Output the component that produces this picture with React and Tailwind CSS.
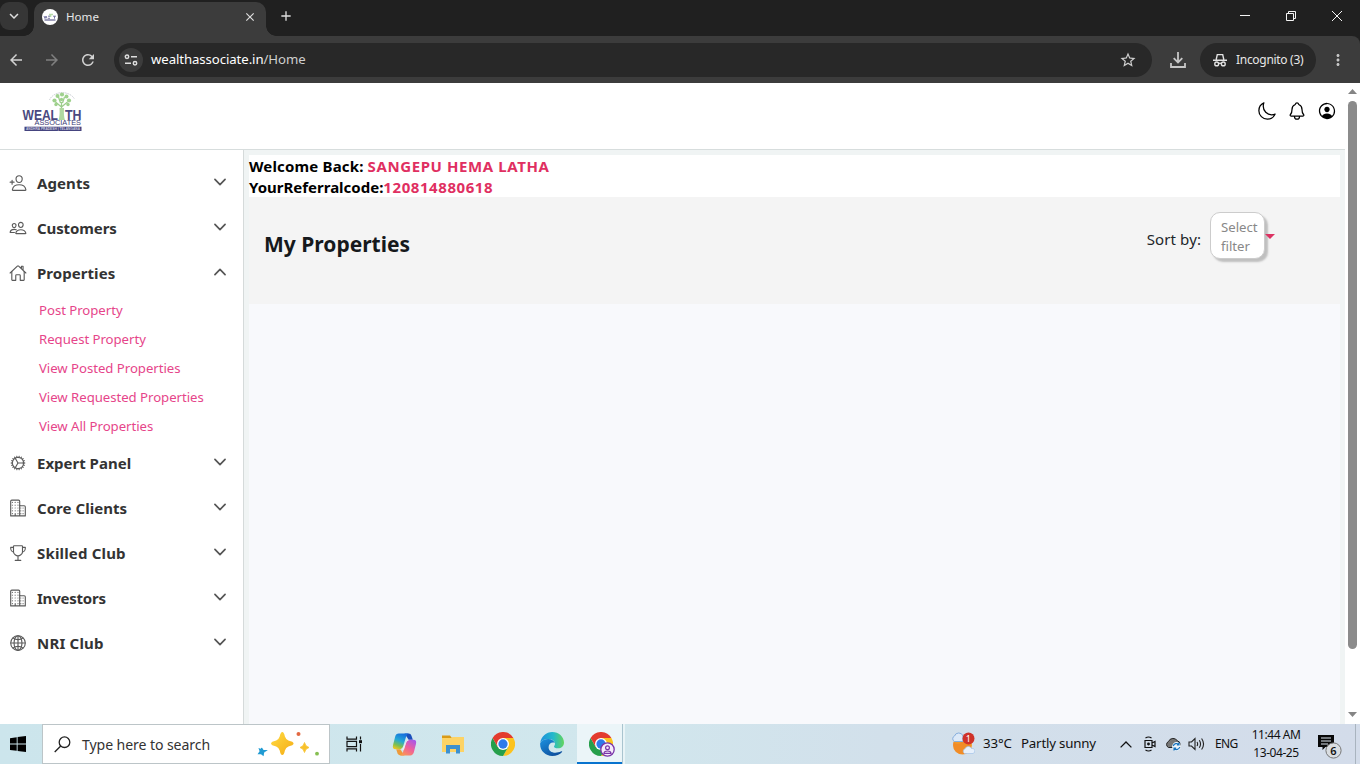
import React from "react";
import {
  IoPersonAddOutline,
  IoPeopleOutline,
  IoHomeOutline,
  IoCogOutline,
  IoBusinessOutline,
  IoTrophyOutline,
  IoGlobeOutline,
  IoChevronDownOutline,
  IoChevronUpOutline,
  IoMoonOutline,
  IoNotificationsOutline,
  IoPersonCircleOutline,
} from "react-icons/io5";
import {
  MdArrowBack,
  MdArrowForward,
  MdRefresh,
  MdStarBorder,
  MdMoreVert,
  MdClose,
  MdAdd,
  MdKeyboardArrowDown,
} from "react-icons/md";

const menu = [
  { label: "Agents", icon: IoPersonAddOutline, track: "tracking-[0.1px]" },
  { label: "Customers", icon: IoPeopleOutline, track: "tracking-[-0.1px]" },
  {
    label: "Properties",
    icon: IoHomeOutline,
    track: "tracking-[0.05px]",
    items: [
      "Post Property",
      "Request Property",
      "View Posted Properties",
      "View Requested Properties",
      "View All Properties",
    ],
  },
  { label: "Expert Panel", icon: IoCogOutline, track: "tracking-[0px]" },
  { label: "Core Clients", icon: IoBusinessOutline, track: "tracking-[0.05px]" },
  { label: "Skilled Club", icon: IoTrophyOutline, track: "tracking-[0.17px]" },
  { label: "Investors", icon: IoBusinessOutline, track: "tracking-[-0.22px]" },
  { label: "NRI Club", icon: IoGlobeOutline, track: "tracking-[0.2px]" },
];

function Logo({ className }) {
  return (
    <svg viewBox="0 0 60 42" className={className}>
      <path d="M27 10a13.5 11 0 0 1 25 -1" fill="none" stroke="#b9bec6" strokeWidth="0.8" strokeDasharray="1.5 0.8" />
      <g fill="none" stroke="#9ccd8b" strokeWidth="1.3">
        <path d="M39 29V12M39 17l-6-5M39 17l6-5M38 13l-2-6M40 13l2-6" />
      </g>
      <path d="M36 30q1.500-4 1-12h4.500q-.5 8 1 12z" fill="#b0d8a0" />
      <g fill="#9fd18d">
        <circle cx="32" cy="10.500" r="2.100" />
        <circle cx="35" cy="6" r="2" />
        <circle cx="39.500" cy="4.500" r="2.100" />
        <circle cx="44" cy="6.500" r="2" />
        <circle cx="46.500" cy="10.500" r="2.100" />
        <circle cx="33.500" cy="14.500" r="1.700" />
        <circle cx="45.500" cy="14.500" r="1.700" />
        <circle cx="39" cy="9.500" r="1.700" />
      </g>
      <text x="0" y="29.500" textLength="35.500" lengthAdjust="spacingAndGlyphs" fontFamily="Liberation Sans, sans-serif" fontWeight="700" fontSize="15" fill="#4a4980">WEAL</text>
      <text x="42.500" y="29.500" textLength="16.500" lengthAdjust="spacingAndGlyphs" fontFamily="Liberation Sans, sans-serif" fontWeight="700" fontSize="15" fill="#4a4980">TH</text>
      <text x="12" y="35.300" textLength="46.500" lengthAdjust="spacingAndGlyphs" fontFamily="Liberation Sans, sans-serif" fontSize="6.800" fill="#3b3a75">ASSOCIATES</text>
      <rect x="2" y="36.700" width="57" height="4.300" fill="#45447f" />
      <text x="3.500" y="40.300" textLength="54" lengthAdjust="spacingAndGlyphs" fontFamily="Liberation Sans, sans-serif" fontWeight="700" fontSize="3.800" fill="#c9c9de">ANDHRA PRADESH | TELANGANA</text>
    </svg>
  );
}

function TabIcon() {
  return (
    <svg viewBox="0 0 16 16" className="size-4">
      <circle cx="8" cy="8" r="8" fill="#fff" />
      <path d="M8.500 8V5M7 5.500h4" stroke="#b5dba8" strokeWidth="1.500" />
      <path d="M2 7l1 2.500L4 7l1 2.500M6 7.200h2M6 9.300h2M11 7.200h3M12.500 7.200v2.500" fill="none" stroke="#6c6b9b" strokeWidth="0.900" />
      <path d="M2.500 11h11" stroke="#77769f" strokeWidth="1.400" />
    </svg>
  );
}

function BrowserChrome() {
  return (
    <div className="h-[83px] shrink-0 bg-[#202020] text-[#dedede]">
      <div className="flex h-9 items-end">
        <div className="flex h-9 w-[34px] shrink-0 items-start rounded-br-[9px] bg-[#202020] pt-[2px]">
          <div className="flex size-7 items-center justify-center rounded-[9px] bg-[#363636]">
            <MdKeyboardArrowDown className="size-[18px]" />
          </div>
        </div>
        <div className="-ml-[10px] h-[10px] w-[10px] bg-[radial-gradient(circle_at_top_left,transparent_9.5px,#3c3c3c_10px)]" />
        <div className="flex h-[34px] w-[232px] items-center rounded-t-[10px] bg-[#3c3c3c] pr-[9px] pb-[4px] pl-2">
          <TabIcon />
          <span className="ml-2 flex-1 text-[11.600px] text-[#e6e6e6]">Home</span>
          <MdClose className="size-[14px]" />
        </div>
        <div className="h-[10px] w-[10px] bg-[radial-gradient(circle_at_top_right,transparent_9.5px,#3c3c3c_10px)]" />
        <MdAdd className="mb-[12px] ml-[2px] size-4" />
        <div className="flex-1" />
        <svg className="h-9 w-[138px]" viewBox="0 0 138 36" fill="none" stroke="#f4f4f4" strokeWidth="1">
          <path d="M18 15.500h10M64.500 13.500h7v7h-7zM66.500 13.500v-2h7v7h-2M110 11l10 10M120 11l-10 10" />
        </svg>
      </div>
      <div className="flex h-[47px] items-center rounded-tr-[8px] bg-[#3c3c3c] pl-[7px]">
        <MdArrowBack className="size-[18px] text-[#d2d2d2]" />
        <MdArrowForward className="ml-[18px] size-[18px] text-[#808080]" />
        <MdRefresh className="ml-[18px] size-[18px] text-[#d2d2d2]" />
        <div className="ml-[17px] flex h-[34px] w-[1038px] items-center rounded-full bg-[#282828] pr-[15px] pl-[5px]">
          <div className="flex size-6 items-center justify-center rounded-full bg-[#3c3c3c]">
            <svg className="size-4" viewBox="0 0 16 16" fill="none" stroke="#dedede" strokeWidth="1.500">
              <circle cx="4" cy="4.700" r="1.700" />
              <circle cx="12" cy="11.200" r="1.700" />
              <path d="M8 4.700h6M2 11.200h6" />
            </svg>
          </div>
          <span className="ml-2 text-[13.200px] tracking-[-0.08px] text-[#cfcfcf]">
            <span className="text-white">wealthassociate.in</span>/Home
          </span>
          <div className="flex-1" />
          <MdStarBorder className="size-[18px] text-[#cfcfcf]" />
        </div>
        <svg className="ml-[17px] size-[18px]" viewBox="0 0 18 18" fill="none" stroke="#c7c7c7" strokeWidth="1.800">
          <path d="M9 1v10M4.700 7.200L9 11.500l4.300-4.300M2 12v4h14v-4" />
        </svg>
        <div className="ml-[13px] flex h-[34px] w-[116px] items-center rounded-full bg-[#282828] pl-[13px]">
          <svg className="size-[14px]" viewBox="0 0 14 14" fill="none" stroke="#e3e3e3" strokeWidth="1.400">
            <path d="M3.200 6.500L4.300 1.600h5.400l1.100 4.900M0 7.300h14M5.500 10.600q1.500-1 3 0" />
            <circle cx="3.700" cy="10.900" r="1.900" />
            <circle cx="10.300" cy="10.900" r="1.900" />
          </svg>
          <span className="ml-[9px] text-[12px] tracking-[-0.3px] text-[#e6e6e6]">Incognito (3)</span>
        </div>
        <MdMoreVert className="ml-[13px] size-[18px] text-[#c7c7c7]" />
      </div>
    </div>
  );
}

function Sidebar() {
  return (
    <nav className="w-[244px] shrink-0 border-r border-[#d5dada] bg-white pt-[11px]">
      {menu.map(({ label, icon: Icon, track, items }) => (
        <div key={label}>
          <div className="flex h-[45px] items-center pr-[14px] pb-[1px] pl-[9px]">
            <Icon className="size-[18px] text-[#5a5a5a]" />
            <span className={`ml-[10px] flex-1 text-[15px] font-bold text-[#333] ${track}`}>{label}</span>
            {items ? (
              <IoChevronUpOutline className="mb-[2px] size-[18px] text-[#555]" />
            ) : (
              <IoChevronDownOutline className="mb-[2px] size-[18px] text-[#555]" />
            )}
          </div>
          {items?.map((item) => (
            <div key={item} className="flex h-[29px] items-center pl-[39px] text-[13.200px] tracking-[-0.04px] text-[#e6458a]">
              {item}
            </div>
          ))}
        </div>
      ))}
    </nav>
  );
}

function ScrollBar() {
  return (
    <div className="flex w-[15px] shrink-0 flex-col items-center bg-white pt-[6px] pb-[7px]">
      <svg className="h-[5px] w-[9px]" viewBox="0 0 9 5"><path d="M0 5L4.500 0 9 5z" fill="#858585" /></svg>
      <div className="mt-[7px] h-[548px] w-[9px] rounded-full bg-[#8b8b8b]" />
      <div className="flex-1" />
      <svg className="h-[5px] w-[9px]" viewBox="0 0 9 5"><path d="M0 0L4.500 5 9 0z" fill="#858585" /></svg>
    </div>
  );
}

function MainPanel() {
  return (
    <main className="flex min-w-0 flex-1 flex-col bg-[#f0f4f4] pt-[5px] pr-[5px] pl-[5px]">
      <div className="h-[42px] bg-white pt-[1px] text-[15px] leading-[21px] font-bold text-black">
        <div><span className="tracking-[0.16px]">Welcome Back: </span><span className="tracking-[0.600px] text-[#e02f61]">SANGEPU HEMA LATHA</span></div>
        <div>YourReferralcode:<span className="tracking-[0.570px] text-[#e02f61]">120814880618</span></div>
      </div>
      <div className="flex h-[107px] items-start bg-[#f4f4f4] pl-[15px]">
        <h1 className="mt-[31px] flex-1 text-[21px] leading-8 font-bold text-[#16191c]">My Properties</h1>
        <span className="mt-[30px] text-[15px] leading-6 tracking-[0.1px] text-[#212529]">Sort by:</span>
        <div className="mt-[15px] ml-[9px] h-[47px] w-[55px] rounded-[10px] border border-[#ccc] bg-white pt-[5px] pl-[10px] text-[13.200px] leading-[19px] text-[#888] shadow-[3px_3px_2px_#bfbfbf]">
          Select<br />filter
        </div>
        <svg className="mt-[37px] mr-[65px] h-[5px] w-[10px]" viewBox="0 0 10 5"><path d="M0 0h10L5 5z" fill="#dc3363" /></svg>
      </div>
      <div className="flex-1 bg-[#f8f9fc]" />
    </main>
  );
}

function ChromeLogo({ className }) {
  return (
    <svg className={className} viewBox="0 0 48 48">
      <path d="M24 12H44.800A24 24 0 0 1 24 48L34.400 30z" fill="#fcc31e" />
      <path d="M3.200 12A24 24 0 0 0 24 48L34.400 30 24 24 13.600 30z" fill="#269f4b" />
      <path d="M24 12H44.800A24 24 0 0 0 3.200 12L13.600 30z" fill="#e33b2e" />
      <circle cx="24" cy="24" r="12" fill="#fff" />
      <circle cx="24" cy="24" r="9.300" fill="#2f7bea" />
    </svg>
  );
}

function CopilotLogo() {
  return (
    <svg className="size-[25px]" viewBox="0 0 24 24">
      <defs>
        <linearGradient id="cpA" x1="0.600" y1="0" x2="0.200" y2="1">
          <stop offset="0" stopColor="#1670dd" />
          <stop offset="0.450" stopColor="#25a9d5" />
          <stop offset="0.750" stopColor="#7cbf50" />
          <stop offset="1" stopColor="#f2c51e" />
        </linearGradient>
        <linearGradient id="cpB" x1="0.800" y1="0" x2="0.200" y2="1">
          <stop offset="0" stopColor="#a957e8" />
          <stop offset="0.500" stopColor="#ef5f9c" />
          <stop offset="1" stopColor="#fb9655" />
        </linearGradient>
      </defs>
      <path d="M12 1.500h4q2 0 2.700 2l1.300 4h-4z" fill="#1b4fbb" />
      <path d="M12 22.500H8q-2 0-2.700-2L4 16.500h4z" fill="#ee9a3a" />
      <path d="M17.500 22.500H8q1.800-.5 2.500-3l2.700-9q.8-3 3.800-3h3.500q3.500 0 2.500 4l-2 8q-.8 3-3.500 3z" fill="url(#cpB)" />
      <path d="M6.500 1.500H16q-1.800.5-2.500 3l-2.700 9q-.8 3-3.800 3H3.500Q0 16.500 1 12.500l2-8q.8-3 3.500-3z" fill="url(#cpA)" />
      <path d="M14.300 7.600h2.200q-2.300.4-3 2.900l-2 6.500h-2.300q1.300-1 1.800-3z" fill="#e6f1f5" />
    </svg>
  );
}

function EdgeLogo() {
  return (
    <svg className="size-6" viewBox="0 0 24 24">
      <defs>
        <linearGradient id="edA" x1="0" y1="0.500" x2="1" y2="0.500">
          <stop offset="0" stopColor="#1c8fdc" />
          <stop offset="0.550" stopColor="#25b9cb" />
          <stop offset="1" stopColor="#62d55c" />
        </linearGradient>
        <linearGradient id="edB" x1="0" y1="0" x2="0.700" y2="1">
          <stop offset="0" stopColor="#1c92e0" />
          <stop offset="1" stopColor="#0d4f9d" />
        </linearGradient>
      </defs>
      <path d="M.3 10.500C1.300 4.300 6.300 0 12.200 0 18.700 0 24 4.700 24 10.500c0 3.700-2.700 5.800-6 5.800-2.700 0-4-.8-4-1.600 0-.7 1-1.100 1-2.900 0-2.800-2.800-4.900-6.300-4.900C4.600 6.900 1.500 8.600.3 10.500z" fill="url(#edA)" />
      <path d="M.2 11C1.500 8.200 4.900 6.900 8.300 6.900c3.500 0 5.900 1.700 6.500 4-2.700-1.500-6.200.6-6.200 4.300 0 4.600 5.700 7.400 12.700 4.100.6-.3 1.200.2.800.8C19.900 22.600 16.200 24 12.200 24 5.300 24-.6 18.500.2 11z" fill="url(#edB)" />
    </svg>
  );
}

function Sparkles() {
  return (
    <svg className="h-7 w-[64px]" viewBox="0 0 64 28">
      <defs>
        <linearGradient id="spk" x1="0" y1="0" x2="1" y2="1">
          <stop offset="0" stopColor="#ffdc45" />
          <stop offset="1" stopColor="#f5ab12" />
        </linearGradient>
      </defs>
      <path d="M26.300 2q1.700 0 2.600 4.500 1 3 3.500 4 5.200 1.200 5.200 3t-5.200 3q-2.500 1-3.500 4-.9 4.500-2.600 4.500t-2.600-4.500q-1-3-3.500-4-5.200-1.200-5.200-3t5.200-3q2.500-1 3.500-4Q24.600 2 26.300 2z" fill="url(#spk)" />
      <path d="M48.500 12.500q.8 4 4.500 5-3.700 1-4.500 5-.8-4-4.500-5 3.700-1 4.500-5z" fill="#f8c12c" stroke="#f8c12c" strokeWidth="0.800" />
      <path d="M5.500 18l1.500 2.300 3 .2-2.500 1.800-.4 2.700-2-1.600-2.300.2 1.500-2.300-.8-2.300 2.200.8z" fill="#219bd3" stroke="#219bd3" strokeWidth="1.300" />
      <circle cx="42.500" cy="4" r="2" fill="#e26842" />
      <circle cx="61" cy="23.700" r="1.900" fill="#86bf51" />
    </svg>
  );
}

function TaskBar() {
  return (
    <footer className="flex h-10 shrink-0 items-center bg-[linear-gradient(90deg,#cce5ec_0%,#d1e7ed_45%,#d2e0eb_65%,#d3dcea_100%)] text-[#111]">
      <div className="flex w-[42px] justify-center pr-[6px]">
        <svg className="size-4" viewBox="0 0 16 16">
          <path d="M0 2.200L6.700 1.200V7.600H0zM7.600 1.100L16 0v7.600H7.600zM0 8.400h6.700v6.400L0 13.900zM7.600 8.400H16V16l-8.400-1.100z" fill="#000" />
        </svg>
      </div>
      <div className="flex h-10 w-[288px] items-center border border-[#bcc5c8] bg-white pr-[9px] pl-[11px]">
        <svg className="size-[17px]" viewBox="0 0 17 17" fill="none" stroke="#222" strokeWidth="1.300">
          <circle cx="10.500" cy="6.200" r="5.300" />
          <path d="M6.700 10L.7 16" />
        </svg>
        <span className="ml-[11px] flex-1 pt-[1px] text-[14.100px] tracking-[-0.09px] text-[#333]">Type here to search</span>
        <Sparkles />
      </div>
      <div className="flex h-10 w-[48px] items-center justify-center">
        <svg className="h-4 w-[17px]" viewBox="0 0 17 16" fill="none" stroke="#111" strokeWidth="1.200">
          <path d="M1 .5v2.700h9.500V.5M1 15.500v-2.700h9.500v2.700M1 5.400h9.500v5.200H1zM14.500.5v3M14.500 8v7.500" />
          <path d="M13 4.200h3v3h-3z" fill="#111" stroke="none" />
        </svg>
      </div>
      <div className="flex h-10 w-[52px] items-center justify-center"><CopilotLogo /></div>
      <div className="flex h-10 w-[46px] items-center justify-center">
        <svg className="h-[19px] w-[22px]" viewBox="0 0 22 19">
          <path d="M0 .5h8l2 2.500H0z" fill="#d99a16" />
          <path d="M0 3h9l1.500-1H22v15H0z" fill="#fdd365" />
          <path d="M4 10h14v8.500h-4V14H8v4.500H4z" fill="#3d91cf" />
        </svg>
      </div>
      <div className="flex h-10 w-[53px] items-center justify-center"><ChromeLogo className="size-6" /></div>
      <div className="flex h-10 w-[48px] items-center justify-center pr-[3px]"><EdgeLogo /></div>
      <div className="flex h-10 w-[45px] items-center justify-center border-b-2 border-[#0873ce] bg-[#ebf5f8] pt-[2px] pl-[2px]">
        <div className="relative">
          <ChromeLogo className="size-6" />
          <svg className="absolute top-[10px] left-[11px] size-[15px]" viewBox="0 0 15 15">
            <circle cx="7.500" cy="7.500" r="6.700" fill="#f5ecfb" stroke="#7a34a8" strokeWidth="1.300" />
            <g fill="none" stroke="#7a34a8" strokeWidth="1.200">
              <circle cx="7.500" cy="5.800" r="1.900" />
              <path d="M4 11.300q0-2.300 3.500-2.300T11 11.300z" />
            </g>
          </svg>
        </div>
      </div>
      <div className="h-10 w-[3px] border-l border-[#a9c4cf] bg-[#e9f4f7]" />
      <div className="flex-1" />
      <svg className="h-[25px] w-6" viewBox="0 0 24 25">
        <circle cx="11.500" cy="13" r="9.500" fill="#f39a2b" />
        <path d="M2 10q8 6 10-5l8 8q0 9-8.500 9T2 13z" fill="#f07d24" opacity="0.500" />
        <path d="M3.500 9.500a3 3 0 0 1 0-5.500 4.500 4.500 0 0 1 8.500 0v5.500z" fill="#dce9f8" stroke="#86aedd" />
        <path d="M13.500 21.500a2.600 2.600 0 0 1 .5-4.700 3.500 3.500 0 0 1 6.500-.3 2.600 2.600 0 0 1 1.500 5z" fill="#e7f0fb" stroke="#a4c3e8" strokeWidth="0.700" />
        <circle cx="17.500" cy="6.500" r="6" fill="#cf3229" />
        <text x="17.400" y="9.800" textAnchor="middle" fontSize="9" fill="#fff">1</text>
      </svg>
      <span className="ml-[8px] w-[38px] text-[13.300px] tracking-[-0.1px] whitespace-nowrap">33°C</span>
      <span className="w-[76px] text-[13.300px] tracking-[-0.2px] whitespace-nowrap">Partly sunny</span>
      <svg className="ml-[23px] h-[7px] w-3" viewBox="0 0 12 7" fill="none" stroke="#111" strokeWidth="1.300"><path d="M.6 6.400L6 1l5.400 5.400" /></svg>
      <svg className="ml-[12px] h-4 w-3" viewBox="0 0 12 16" fill="none" stroke="#111" strokeWidth="1.200">
        <path d="M1 4.500h7v7H1zM8 7l3-1.500v5L8 9M1.500 2Q4.500 0 7.500 2M1.500 14q3 2 6 0" />
        <circle cx="4.500" cy="8" r="0.800" fill="#111" />
      </svg>
      <svg className="ml-[9px] h-[14px] w-4" viewBox="0 0 16 14">
        <path d="M3.500 10.500a3.300 3.300 0 0 1 0-6 5 5 0 0 1 9-.5 3 3 0 0 1 2.500 3v3.500z" fill="#777" stroke="#222" />
        <circle cx="11.500" cy="9.500" r="4.400" fill="#eef6fc" />
        <path d="M8.300 9a3.200 3.200 0 0 1 5.500-1.400M14.700 10a3.200 3.200 0 0 1-5.500 1.500M14 5.500v2.400h-2.200M9 13.500v-2.300h2.200" fill="none" stroke="#1772bd" strokeWidth="1.200" />
      </svg>
      <svg className="ml-[7px] h-[14px] w-[17px]" viewBox="0 0 17 14" fill="none" stroke="#222" strokeWidth="1.100">
        <path d="M1 5v4h2.500L7 12.500v-11L3.500 5zM9 5q1.300 2 0 4M11.300 3.300q2.500 3.700 0 7.400M13.600 1.500q3.900 5.500 0 11" />
      </svg>
      <span className="ml-[10px] w-[24px] text-[12px] tracking-[-0.6px]">ENG</span>
      <div className="ml-[8px] flex w-[58px] flex-col items-center text-[12px] leading-[18px] tracking-[-0.45px] whitespace-nowrap">
        <span>11:44 AM</span>
        <span>13-04-25</span>
      </div>
      <div className="ml-[13px] w-[37px]">
        <svg className="mt-[3px] h-[26px] w-6" viewBox="0 0 24 26">
          <path d="M0 2h16v12H7.500l-3 3v-3H0z" fill="#080808" />
          <path d="M3 5h10M3 8h10M3 11h7" stroke="#dce5ee" />
          <circle cx="15.500" cy="17.500" r="7.600" fill="#d9dde1" stroke="#777" />
          <text x="15.500" y="21.500" textAnchor="middle" fontSize="11" fontWeight="600" fill="#111">6</text>
        </svg>
      </div>
      <div className="h-10 w-[5px] border-l border-[#a9b4bf]" />
    </footer>
  );
}

export default function App() {
  return (
    <div className="flex h-[764px] w-[1360px] flex-col overflow-hidden bg-white font-['Noto_Sans',sans-serif]">
      <BrowserChrome />
      <div className="flex min-h-0 flex-1">
        <div className="flex min-w-0 flex-1 flex-col">
          <header className="flex h-[67px] shrink-0 items-start border-b border-[#d7dddd] bg-white pr-[8px] pl-[22px]">
            <Logo className="mt-[7px] h-[42px] w-[61px]" />
            <div className="flex-1" />
            <div className="mt-[18px] flex gap-[10px] text-black">
              <IoMoonOutline className="size-5" />
              <IoNotificationsOutline className="size-5" />
              <IoPersonCircleOutline className="size-5" />
            </div>
          </header>
          <div className="flex min-h-0 flex-1">
            <Sidebar />
            <MainPanel />
          </div>
        </div>
        <ScrollBar />
      </div>
      <TaskBar />
    </div>
  );
}
